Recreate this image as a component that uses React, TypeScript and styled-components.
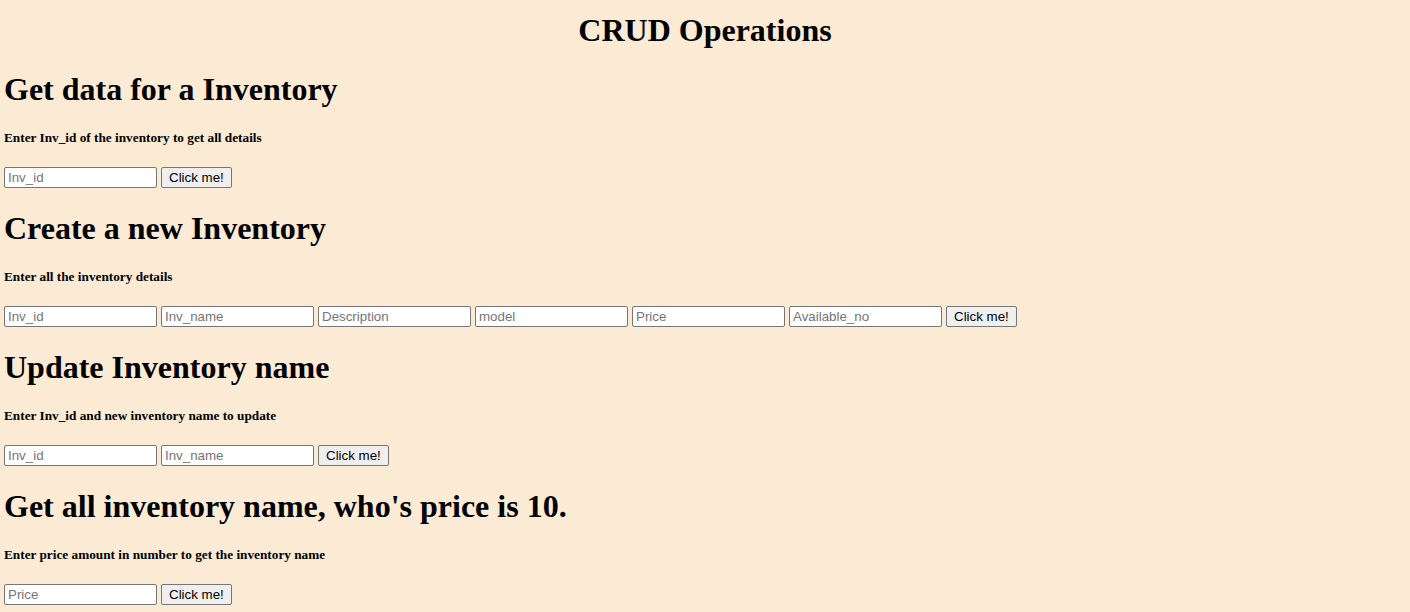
import React from 'react';
import styled, { createGlobalStyle } from 'styled-components';

const GlobalStyle = createGlobalStyle`
	html, body {
		margin: 0;
		background: #fbebd5;
	}
	body {
		padding: 0 4px;
		font-family: "Liberation Serif", "Times New Roman", serif;
		color: #000;
	}
`;

const Page = styled.div`
	display: flex;
	flex-direction: column;
`;

const Title = styled.h2`
	margin: 13px 0 24px;
	font-size: 32px;
	font-weight: bold;
	text-align: center;
	line-height: 34px;
`;

const Heading = styled.h1`
	margin: 0;
	font-size: 32px;
	font-weight: bold;
	line-height: 37px;
`;

const Hint = styled.h5`
	margin: 22px 0 22px;
	font-size: 13.28px;
	font-weight: bold;
	line-height: 15px;
`;

const Row = styled.div`
	display: flex;
	align-items: center;
	gap: 4px;
	margin-bottom: 22px;
`;

const Field = styled.input`
	box-sizing: border-box;
	width: 153px;
	height: 21px;
	margin: 0;
	padding: 1px 3px;
	border: 1px solid #767676;
	border-radius: 2px;
	background: #fff;
	font-family: "Liberation Sans", Arial, sans-serif;
	font-size: 13.33px;
	&::placeholder {
		color: #757575;
	}
`;

const Button = styled.button`
	box-sizing: border-box;
	height: 21px;
	margin: 0;
	padding: 1px 7px;
	border: 1px solid #767676;
	border-radius: 2px;
	background: #efefef;
	color: #000;
	font-family: "Liberation Sans", Arial, sans-serif;
	font-size: 13.33px;
`;

type Section = {
	heading: string;
	hint: string;
	fields: string[];
};

const sections: Section[] = [
	{
		heading: 'Get data for a Inventory',
		hint: 'Enter Inv_id of the inventory to get all details',
		fields: ['Inv_id'],
	},
	{
		heading: 'Create a new Inventory',
		hint: 'Enter all the inventory details',
		fields: ['Inv_id', 'Inv_name', 'Description', 'model', 'Price', 'Available_no'],
	},
	{
		heading: 'Update Inventory name',
		hint: 'Enter Inv_id and new inventory name to update',
		fields: ['Inv_id', 'Inv_name'],
	},
	{
		heading: "Get all inventory name, who's price is 10.",
		hint: 'Enter price amount in number to get the inventory name',
		fields: ['Price'],
	},
];

const App = (): JSX.Element => {
	return (
		<Page>
			<GlobalStyle />
			<Title>CRUD Operations</Title>
			{sections.map((s) => (
				<React.Fragment key={s.heading}>
					<Heading>{s.heading}</Heading>
					<Hint>{s.hint}</Hint>
					<Row>
						{s.fields.map((f) => (
							<Field key={f} type="text" placeholder={f} />
						))}
						<Button>Click me!</Button>
					</Row>
				</React.Fragment>
			))}
		</Page>
	);
};

export default App;
